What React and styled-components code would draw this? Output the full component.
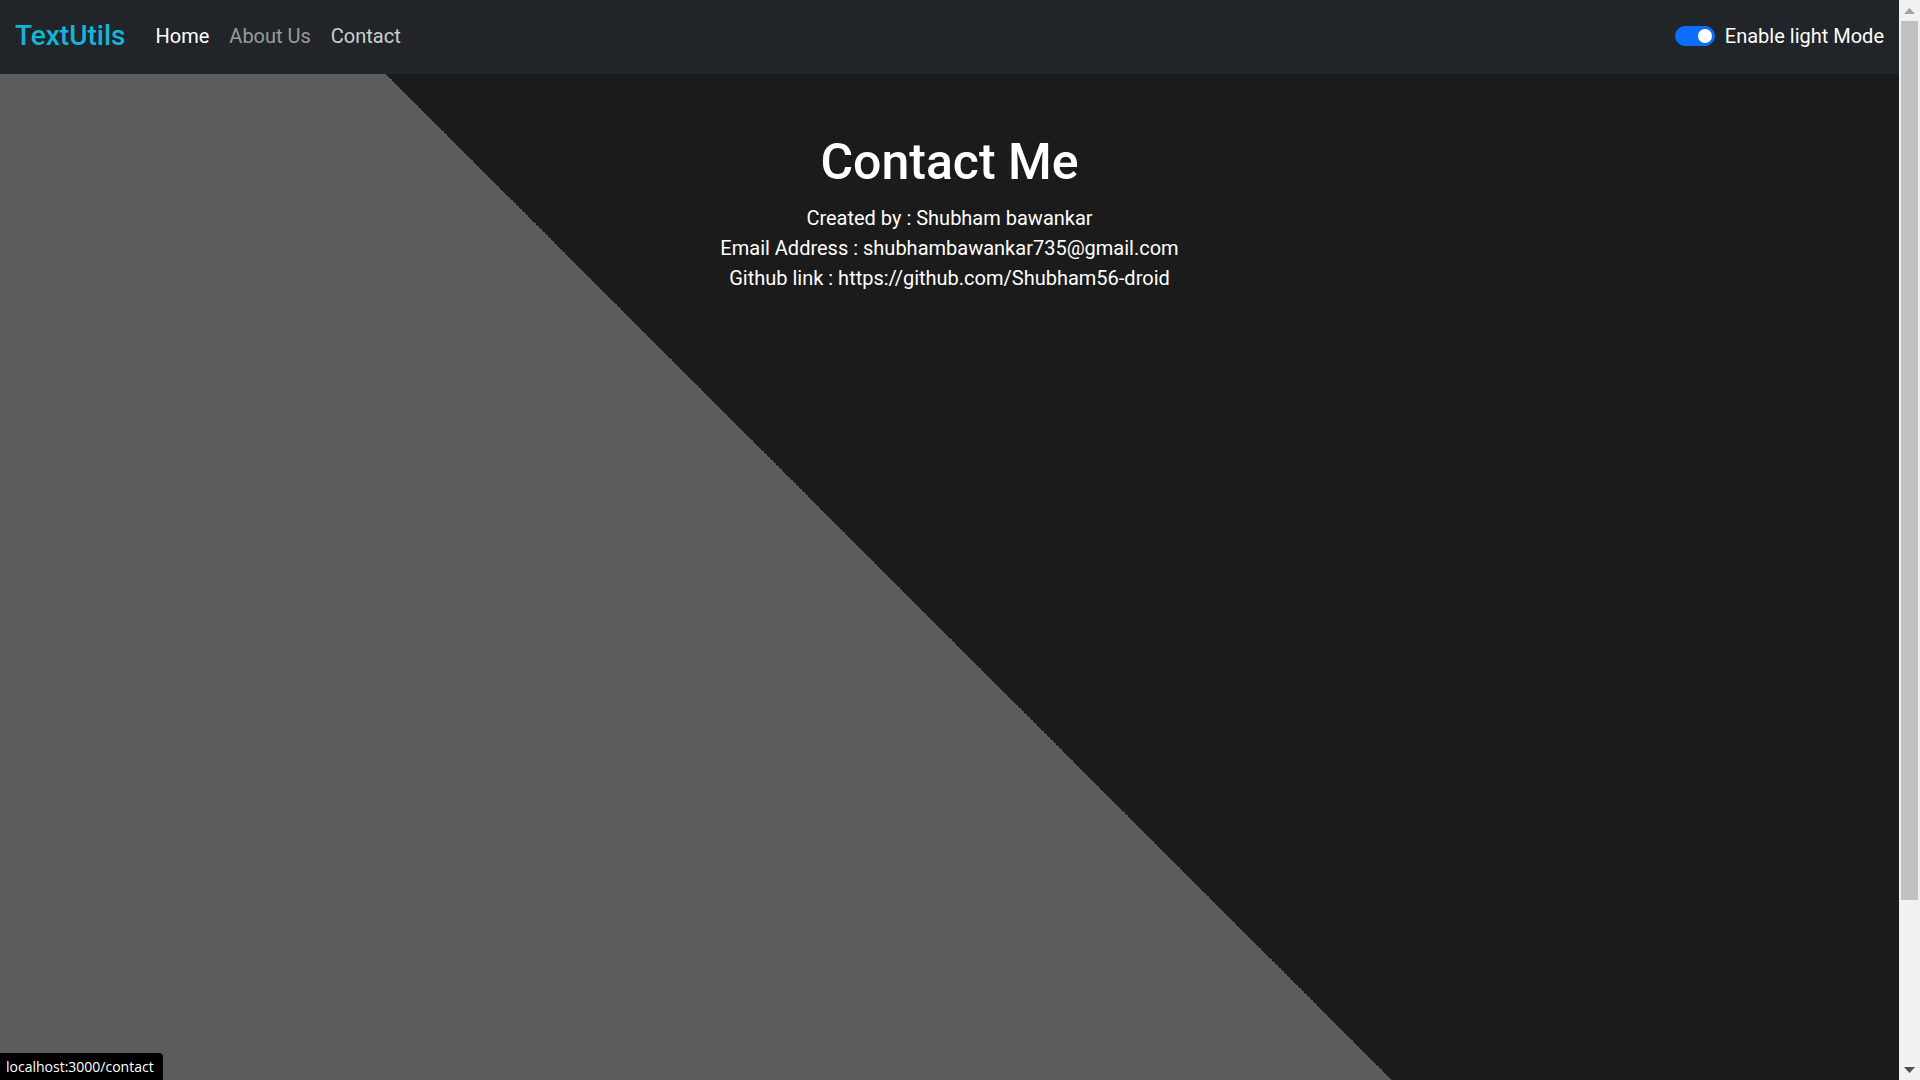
import React, { useState } from "react";
import styled, { createGlobalStyle } from "styled-components";

const GlobalStyle = createGlobalStyle`
    html, body {
        margin: 0;
        padding: 0;
    }
    body {
        font-family: Roboto, "Liberation Sans", Arial, sans-serif;
        background: #1b1b1b;
    }
`;

/* 页面主体：斜向双色背景 */
const PageStyled = styled.div`
    min-height: 1275px;
    margin-right: 21px;
    background: linear-gradient(45deg, #5c5c5c 50%, #1b1b1b 50%);
    color: #fff;
`;

const NavBar = styled.nav`
    height: 74px;
    background: #212529;
    display: flex;
    align-items: center;
    padding: 0 15px;
    box-sizing: border-box;
`;

const Brand = styled.a`
    font-size: 28px;
    font-weight: 500;
    color: #14b5d8;
    text-decoration: none;
    margin-right: 20px;
    padding-bottom: 3px;
`;

const NavList = styled.ul`
    display: flex;
    align-items: center;
    gap: 20px;
    list-style: none;
    margin: 0;
    padding: 0 0 2px 10px;
    flex: 1;
`;

const NavLink = styled.a`
    font-size: 20px;
    text-decoration: none;
    color: ${p => p.$active ? "#ffffff" : p.$hover ? "rgba(255,255,255,0.78)" : "rgba(255,255,255,0.55)"};
`;

const SwitchBox = styled.label`
    display: flex;
    align-items: center;
    gap: 10px;
    font-size: 20px;
    color: #fff;
    margin-right: 0;
    padding-bottom: 2px;
    cursor: pointer;
`;

const Track = styled.span`
    position: relative;
    width: 40px;
    height: 20px;
    border-radius: 10px;
    background: ${p => p.$on ? "#0d6efd" : "#fff"};
    border: 1px solid ${p => p.$on ? "#0d6efd" : "#bbb"};
    box-sizing: border-box;
    .knob {
        position: absolute;
        top: 2px;
        left: ${p => p.$on ? "22px" : "2px"};
        width: 14px;
        height: 14px;
        border-radius: 50%;
        background: ${p => p.$on ? "#fff" : "#bbb"};
    }
`;

const Content = styled.main`
    padding-top: 58px;
    text-align: center;
    h1 {
        font-size: 50px;
        font-weight: 500;
        line-height: 1.2;
        margin: 0 0 11px;
    }
    p {
        font-size: 20px;
        line-height: 30px;
        margin: 0;
    }
`;

const StatusBar = styled.div`
    position: fixed;
    left: 0;
    bottom: 0;
    height: 27px;
    padding: 0 9px 0 6px;
    display: flex;
    align-items: center;
    background: #000;
    color: #fff;
    font-family: "Open Sans", "Noto Sans", sans-serif;
    font-size: 14px;
    border-top-right-radius: 4px;
`;

/* 浏览器滚动条 */
const ScrollBar = styled.aside`
    position: fixed;
    top: 0;
    right: 0;
    width: 21px;
    height: 100vh;
    background: #f1f1f1;
    display: flex;
    flex-direction: column;
    align-items: center;
    .arrow {
        height: 21px;
        display: flex;
        align-items: center;
        justify-content: center;
    }
    .thumb {
        width: 17px;
        height: 879px;
        background: #c1c1c1;
    }
    .rest {
        flex: 1;
    }
`;

const App = function App() {
    let [dark, setDark] = useState(true);

    return <>
        <GlobalStyle />
        <PageStyled>
            <NavBar>
                <Brand href="#">TextUtils</Brand>
                <NavList>
                    <li><NavLink href="#" $active>Home</NavLink></li>
                    <li><NavLink href="#">About Us</NavLink></li>
                    <li><NavLink href="#" $hover>Contact</NavLink></li>
                </NavList>
                <SwitchBox onClick={() => setDark(!dark)}>
                    <Track $on={dark}><span className="knob" /></Track>
                    Enable light Mode
                </SwitchBox>
            </NavBar>
            <Content>
                <h1>Contact Me</h1>
                <p>Created by : Shubham bawankar</p>
                <p>Email Address : shubhambawankar735@gmail.com</p>
                <p>Github link : https://github.com/Shubham56-droid</p>
            </Content>
        </PageStyled>
        <StatusBar>localhost:3000/contact</StatusBar>
        <ScrollBar>
            <span className="arrow">
                <svg width="11" height="6" viewBox="0 0 11 6"><polygon points="0,6 5.5,0 11,6" fill="#a3a3a3" /></svg>
            </span>
            <span className="thumb" />
            <span className="rest" />
            <span className="arrow">
                <svg width="11" height="6" viewBox="0 0 11 6"><polygon points="0,0 5.5,6 11,0" fill="#505050" /></svg>
            </span>
        </ScrollBar>
    </>;
};

export default App;
